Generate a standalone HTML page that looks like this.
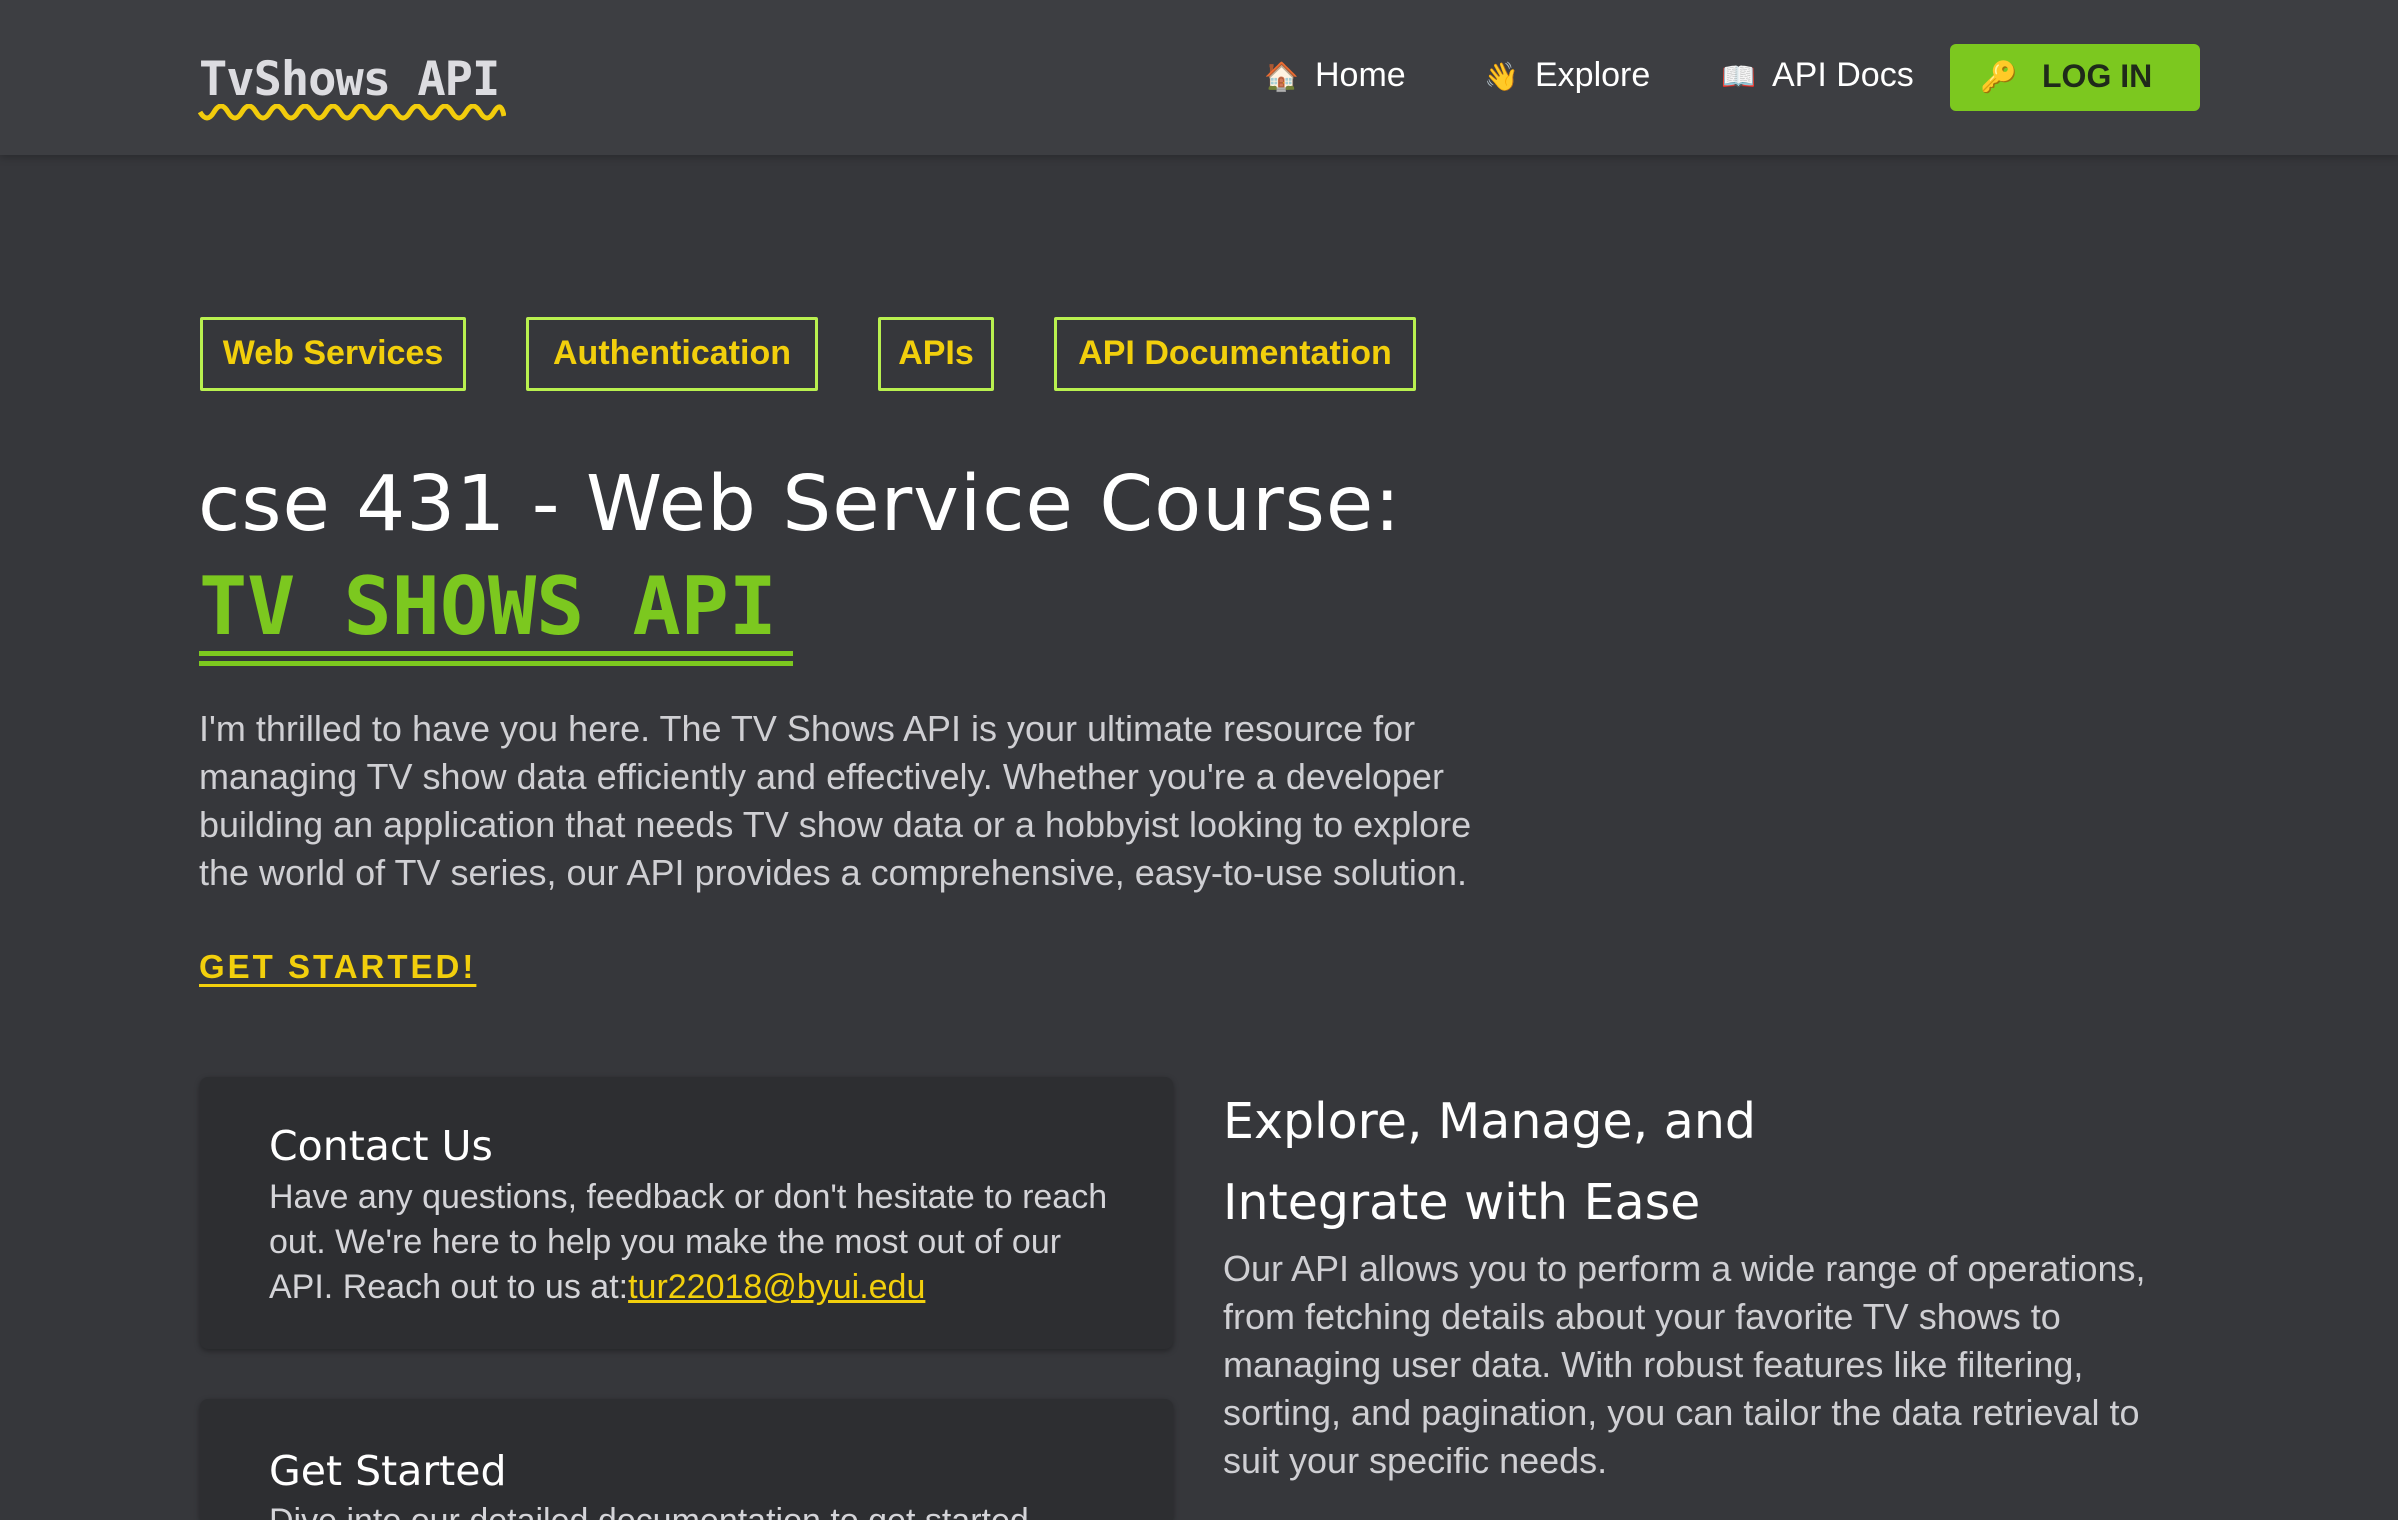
<!DOCTYPE html>
<html><head><meta charset="utf-8"><style>
*{margin:0;padding:0;box-sizing:border-box}
html,body{width:2398px;height:1520px;overflow:hidden}
body{background:#36373b;font-family:"Liberation Sans",sans-serif;position:relative;color:#d4d4d8}
.a{position:absolute;white-space:nowrap}
header{position:absolute;left:0;top:0;width:2398px;height:155px;background:#3d3e42;box-shadow:0 2px 8px rgba(0,0,0,.25)}
.logo{left:199px;top:52px;font-size:47px;font-weight:bold;color:#dcdce0;font-family:"DejaVu Sans Mono","Liberation Mono",monospace;letter-spacing:-1px}
.nav{font-size:34px;color:#fff;top:56px}
.btn{left:1950px;top:44px;width:250px;height:67px;background:#7cc81f;border-radius:6px}
.btn span{position:absolute;left:92px;top:14px;font-size:32px;font-weight:bold;color:#1f2a1a}
.tag{top:317px;height:74px;border:3px solid #b9f04f;border-radius:2px;color:#f2cf0c;font-weight:bold;font-size:34px;text-align:center;line-height:67px}
.p{font-size:36px;color:#cfcfd3;line-height:48px}
.card{position:absolute;left:200px;width:973px;background:#2d2e31;border-radius:8px;box-shadow:0 2px 6px rgba(0,0,0,.35);overflow:hidden}
</style></head><body>
<header>
<div class="a logo">TvShows API</div>
<svg class="a" style="left:198px;top:104px" width="308" height="20" viewBox="0 0 308 20"><path d="M2 8 Q9 20 16 8 T30 8 T44 8 T58 8 T72 8 T86 8 T100 8 T114 8 T128 8 T142 8 T156 8 T170 8 T184 8 T198 8 T212 8 T226 8 T240 8 T254 8 T268 8 T282 8 T296 8 T306 12" fill="none" stroke="#f2cc0c" stroke-width="5"/></svg>
<div class="a nav" style="left:1264px;font-size:28px;top:60px">🏠</div>
<div class="a nav" style="left:1315px">Home</div>
<div class="a nav" style="left:1484px;font-size:28px;top:60px">👋</div>
<div class="a nav" style="left:1535px">Explore</div>
<div class="a nav" style="left:1721px;font-size:28px;top:60px">📖</div>
<div class="a nav" style="left:1772px">API Docs</div>
<div class="a btn"><span style="left:30px;font-size:30px;top:16px">🔑</span><span>LOG IN</span></div>
</header>

<div class="a tag" style="left:200px;width:266px">Web Services</div>
<div class="a tag" style="left:526px;width:292px">Authentication</div>
<div class="a tag" style="left:878px;width:116px">APIs</div>
<div class="a tag" style="left:1054px;width:362px">API Documentation</div>

<div class="a" style="left:198px;top:460px;font-size:77px;color:#fff;font-family:'DejaVu Sans',sans-serif;letter-spacing:1px">cse 431 - Web Service Course:</div>
<div class="a" style="left:199px;top:566px;font-size:80px;font-weight:bold;color:#7cc81f;font-family:'DejaVu Sans Mono',monospace;letter-spacing:0;width:594px;height:100px;border-bottom:15px double #7cc81f;line-height:82px">TV SHOWS API</div>

<div class="a p" style="left:199px;top:705px">I'm thrilled to have you here. The TV Shows API is your ultimate resource for<br>managing TV show data efficiently and effectively. Whether you're a developer<br>building an application that needs TV show data or a hobbyist looking to explore<br>the world of TV series, our API provides a comprehensive, easy-to-use solution.</div>

<div class="a" style="left:199px;top:948px;font-size:33px;font-weight:bold;color:#f2cf0c;letter-spacing:3px;text-decoration:underline;text-underline-offset:6px">GET STARTED!</div>

<div class="card" style="top:1077px;height:272px">
<div class="a" style="left:69px;top:45px;font-size:41px;color:#fff;font-family:'DejaVu Sans',sans-serif">Contact Us</div>
<div class="a" style="left:69px;top:98px;font-size:34px;line-height:45px;color:#d4d4d8">Have any questions, feedback or don't hesitate to reach<br>out. We're here to help you make the most out of our<br>API. Reach out to us at:<span style="color:#f2cf0c;text-decoration:underline">tur22018@byui.edu</span></div>
</div>
<div class="card" style="top:1399px;height:121px;border-radius:8px 8px 0 0">
<div class="a" style="left:69px;top:48px;font-size:41px;color:#fff;font-family:'DejaVu Sans',sans-serif">Get Started</div>
<div class="a" style="left:69px;top:103px;font-size:34px;color:#d4d4d8">Dive into our detailed documentation to get started</div>
</div>

<div class="a" style="left:1223px;top:1081px;font-size:49px;line-height:81px;color:#fff;font-family:'DejaVu Sans',sans-serif">Explore, Manage, and<br>Integrate with Ease</div>
<div class="a p" style="left:1223px;top:1245px;font-size:36px">Our API allows you to perform a wide range of operations,<br>from fetching details about your favorite TV shows to<br>managing user data. With robust features like filtering,<br>sorting, and pagination, you can tailor the data retrieval to<br>suit your specific needs.</div>
</body></html>
